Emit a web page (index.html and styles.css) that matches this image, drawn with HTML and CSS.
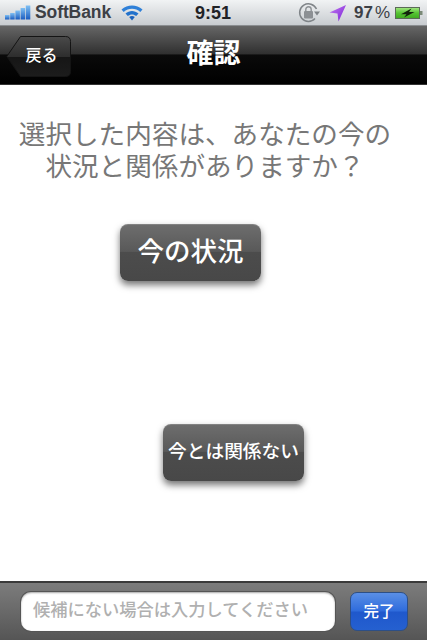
FILE: index.html
```html
<!DOCTYPE html>
<html lang="ja">
<head>
<meta charset="utf-8">
<title>確認</title>
<link rel="stylesheet" href="styles.css">
</head>
<body>
<div class="phone">
  <div class="status">
    <div class="status-left">
      <svg class="signal" width="26" height="15" viewBox="0 0 26 15">
        <defs><linearGradient id="sg" x1="0" y1="0" x2="0" y2="1"><stop offset="0" stop-color="#7fc0f4"/><stop offset="1" stop-color="#1a5cc0"/></linearGradient></defs>
        <rect x="0" y="10" width="4.500" height="4.500" fill="url(#sg)"/>
        <rect x="5.200" y="8" width="4.500" height="6.500" fill="url(#sg)"/>
        <rect x="10.400" y="5.500" width="4.500" height="9" fill="url(#sg)"/>
        <rect x="15.600" y="3" width="4.500" height="11.500" fill="url(#sg)"/>
        <rect x="20.800" y="0.500" width="4.500" height="14" fill="url(#sg)"/>
      </svg>
      <span class="carrier">SoftBank</span>
      <svg class="wifi" width="22" height="17" viewBox="0 0 22 17">
        <path d="M0.500 5.500C6.500 0 15.500 0 21.500 5.500L19.300 8C14.500 3.800 7.500 3.800 2.700 8Z" fill="#2f80d8"/>
        <path d="M4.500 9.600C8.300 6.200 13.700 6.200 17.500 9.600L15.200 12C12.700 9.900 9.300 9.900 6.800 12Z" fill="#2272cc"/>
        <path d="M8.200 13C10 11.600 12 11.600 13.800 13L11 16.500Z" fill="#1a62bc"/>
      </svg>
    </div>
    <div class="time">9:51</div>
    <div class="status-right">
      <svg class="lock" width="24" height="24" viewBox="0 0 24 24">
        <path d="M18 17.500A8.800 8.800 0 1 1 19.500 8" fill="none" stroke="#7f8488" stroke-width="1.500"/>
        <path d="M17 10.500H23L20 14.500Z" fill="#7f8488"/>
        <rect x="7" y="10" width="9" height="7.500" rx="1" fill="#8c9094"/>
        <path d="M8.800 10V8.500A2.700 2.700 0 0 1 14.200 8.500V10" fill="none" stroke="#8c9094" stroke-width="1.400"/>
      </svg>
      <svg class="arrow" width="18" height="18" viewBox="0 0 18 18">
        <defs><linearGradient id="ag" x1="0" y1="0" x2="1" y2="1"><stop offset="0" stop-color="#c37bf0"/><stop offset="1" stop-color="#7b22d8"/></linearGradient></defs>
        <path d="M17 1L0.500 8.500L8.500 9.500L9.500 17.500Z" fill="url(#ag)"/>
      </svg>
      <span class="pct">97<span class="pct-sign">%</span></span>
      <svg class="battery" width="28" height="14" viewBox="0 0 28 14">
        <defs><linearGradient id="bg" x1="0" y1="0" x2="0" y2="1"><stop offset="0" stop-color="#a5e884"/><stop offset="0.5" stop-color="#55c432"/><stop offset="1" stop-color="#3ea81f"/></linearGradient></defs>
        <rect x="0.500" y="1.500" width="24" height="11" fill="url(#bg)" stroke="#5b6b58"/>
        <rect x="25" y="5" width="2.500" height="4" fill="#7b8a78"/>
        <path d="M16.500 2.500L6 8.200H11.500L9 11.500L19.500 6H14Z" fill="#12240c"/>
      </svg>
    </div>
  </div>
  <div class="nav">
    <div class="back"><svg class="back-shape" width="66" height="41" viewBox="0 0 66 41"><defs><linearGradient id="bk" x1="0" y1="0" x2="0" y2="1"><stop offset="0" stop-color="#4a4a4a"/><stop offset="0.5" stop-color="#2e2e2e"/><stop offset="0.52" stop-color="#161616"/><stop offset="1" stop-color="#1c1c1c"/></linearGradient></defs><path d="M14.500 0.500H59.500Q64.500 0.500 64.500 5.500V35.500Q64.500 40.500 59.500 40.500H14.500L0.800 20.500Z" fill="url(#bk)" stroke="#141414"/></svg><span class="back-label">戻る</span></div>
    <h1 class="title">確認</h1>
  </div>
  <main class="content">
    <p class="question">選択した内容は、あなたの今の<br>状況と関係がありますか？</p>
    <button class="choice choice-now">今の状況</button>
    <button class="choice choice-none">今とは関係ない</button>
  </main>
  <div class="toolbar">
    <div class="field">候補にない場合は入力してください</div>
    <button class="done">完了</button>
  </div>
</div>
</body>
</html>
```

FILE: styles.css
```css
* { box-sizing: border-box; }
html, body { margin: 0; padding: 0; }
body { font-family: "Liberation Sans", "Noto Sans CJK JP", sans-serif; background: #fff; }
.phone { width: 427px; height: 640px; display: flex; flex-direction: column; overflow: hidden; }

.status { height: 26px; flex: none; display: flex; align-items: center; justify-content: space-between; padding: 0 4px 0 5px; position: relative; background: linear-gradient(#f1f3f4, #c8ccd0); border-bottom: 1px solid #8a8d90; color: #3c4046; font-weight: 700; }
.status-left, .status-right { display: flex; align-items: center; }
.carrier { font-size: 17.500px; font-weight: 700; letter-spacing: -0.1px; margin-left: 4px; }
.wifi { margin-left: 10px; }
.time { position: absolute; left: 195px; top: 2px; font-size: 18px; color: #1f2226; line-height: 22px; }
.lock { margin-right: 8px; }
.arrow { margin-right: 7px; margin-top: 1px; }
.pct { font-size: 17px; margin-right: 5px; }
.pct-sign { margin-left: 2px; font-weight: 400; }

.nav { height: 59px; flex: none; position: relative; display: flex; align-items: center; justify-content: center; background: linear-gradient(#666 0, #303030 48%, #0a0a0a 50%, #000 100%); border-bottom: 1px solid #333; }
.back { position: absolute; left: 6px; top: 10px; width: 66px; height: 41px; display: flex; align-items: center; justify-content: center; padding: 0 0 5px 5px; }
.back-shape { position: absolute; left: 0; top: 0; }
.back-label { position: relative; color: #fff; font-size: 16px; font-weight: 500; }
.title { margin: 0 0 3px; color: #fff; font-size: 27px; font-weight: 700; line-height: 34px; }

.content { flex: 1; display: flex; flex-direction: column; align-items: flex-start; background: #fff; }
.question { margin: 34px 0 0; width: 100%; padding-right: 17px; text-align: center; color: #777; font-size: 26.600px; line-height: 32px; }
.choice { display: block; width: 141px; height: 57px; padding: 0 0 6px; border: 0; border-radius: 8px; color: #fff; font-family: inherit; text-align: center; white-space: nowrap; background: linear-gradient(#6e6e6e 0, #595959 48%, #4c4c4c 50%, #484848 100%); box-shadow: 0 4px 7px rgba(0,0,0,.55), inset 0 1px 0 rgba(255,255,255,.15); }
.choice-now { margin: 41px 0 0 120px; font-size: 26.500px; font-weight: 500; }
.choice-none { margin: 143px 0 0 163px; font-size: 18.700px; font-weight: 500; }

.toolbar { height: 59px; flex: none; display: flex; align-items: center; padding: 0 19px 0 21px; justify-content: space-between; background: linear-gradient(#7c7c7c 0, #696969 50%, #555 100%); border-top: 2px solid #3a3a3a; }
.field { width: 314px; height: 39px; padding-left: 12px; border-radius: 10px; background: #fff; color: #b0b0b0; font-size: 17.250px; font-weight: 500; line-height: 36px; box-shadow: inset 0 1px 2px rgba(0,0,0,.35), 0 0 0 1px #555; white-space: nowrap; }
.done { width: 58px; height: 39px; padding: 0 0 4px; border: 1px solid #2d4f86; border-radius: 7px; color: #fff; font-family: inherit; font-size: 15.500px; font-weight: 500; background: linear-gradient(#5a8fe6 0, #2f6cdc 48%, #1f58cc 52%, #2560d0 100%); }
```
